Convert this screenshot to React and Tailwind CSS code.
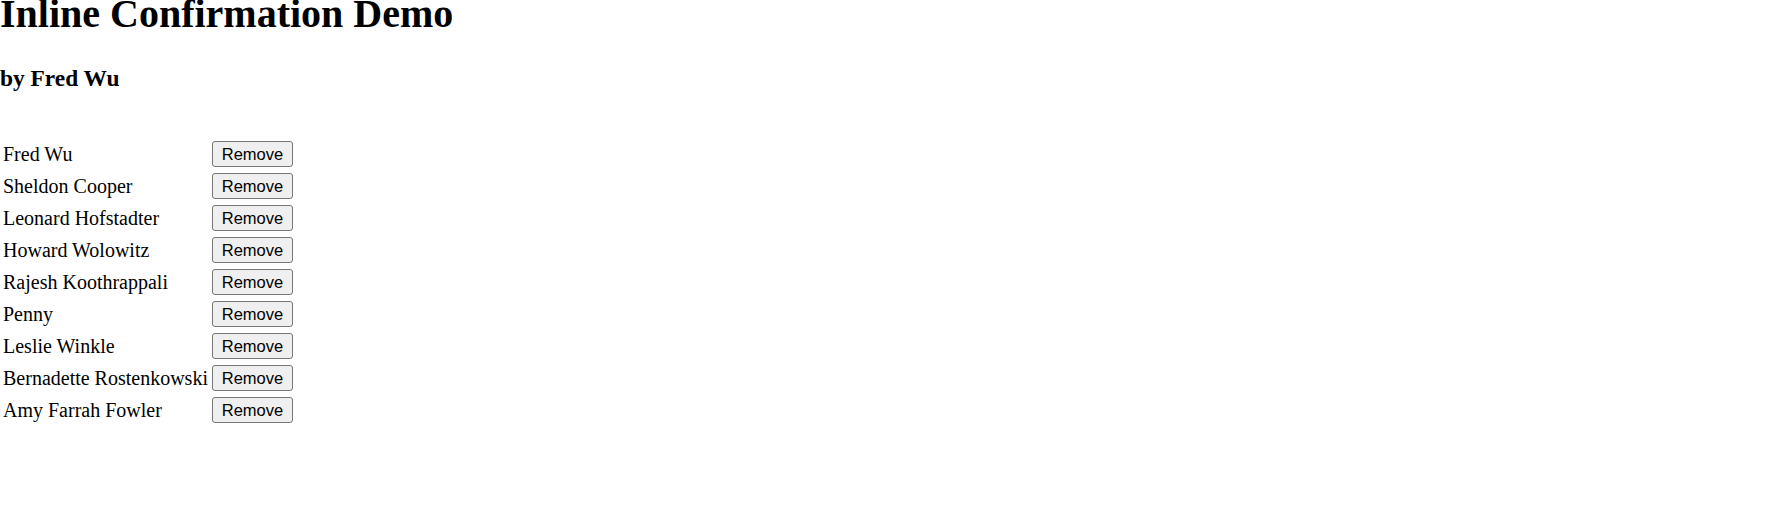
const people = [
  "Fred Wu",
  "Sheldon Cooper",
  "Leonard Hofstadter",
  "Howard Wolowitz",
  "Rajesh Koothrappali",
  "Penny",
  "Leslie Winkle",
  "Bernadette Rostenkowski",
  "Amy Farrah Fowler",
];

export default function App() {
  return (
    <div className="min-h-[531px] bg-white text-black font-['Liberation_Serif','Times_New_Roman',serif]">
      <h1 className="text-[40px] font-bold leading-[28px] whitespace-nowrap">
        Inline Confirmation Demo
      </h1>
      <h3 className="mt-[36px] text-[23.4px] font-bold leading-[28px]">by Fred Wu</h3>

      <div className="mt-[46px] flex flex-col">
        {people.map((name) => (
          <div key={name} className="flex h-[32px] items-center">
            <span className="w-[212px] pl-[3px] text-[20px] whitespace-nowrap">{name}</span>
            <button
              type="button"
              className="h-[26px] w-[81px] rounded-[3px] border border-[#767676] bg-[#efefef] font-['Liberation_Sans',Arial,sans-serif] text-[16.5px] leading-none text-black hover:bg-[#e5e5e5]"
            >
              Remove
            </button>
          </div>
        ))}
      </div>
    </div>
  );
}
